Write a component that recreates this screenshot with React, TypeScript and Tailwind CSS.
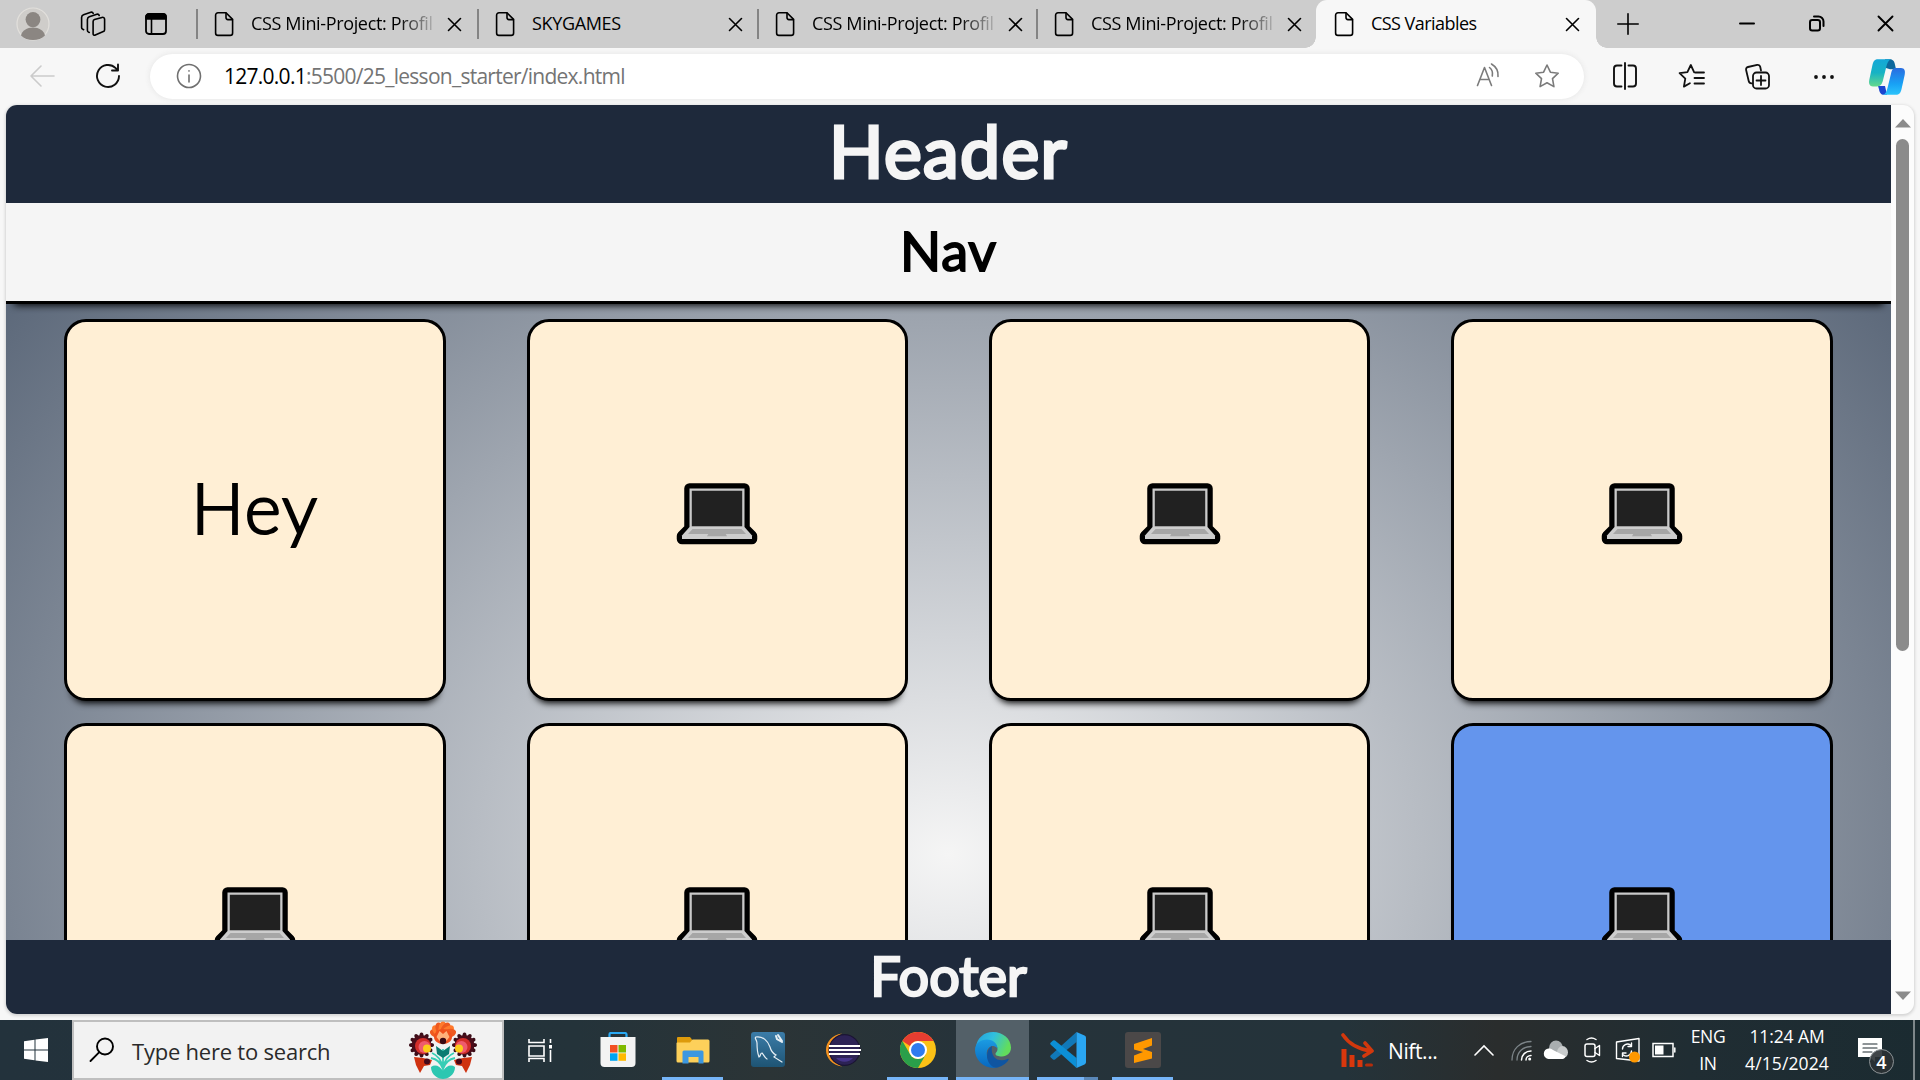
import React from "react";

type BoxProps = { w: number; h: number; vb?: string; className?: string; children: React.ReactNode };

function Svg({ w, h, vb, className = "", children }: BoxProps) {
  return (
    <svg
      width={w}
      height={h}
      viewBox={vb ?? `0 0 ${w} ${h}`}
      className={`block shrink-0 ${className}`}
      fill="none"
      stroke="currentColor"
      strokeWidth={1.6}
      strokeLinecap="round"
      strokeLinejoin="round"
    >
      {children}
    </svg>
  );
}

/* ---------- browser chrome ---------- */

function DocIcon() {
  return (
    <Svg w={20} h={26}>
      <path d="M4 1.8h8l6.6 6.6V22a2.4 2.4 0 0 1-2.4 2.4H4A2.4 2.4 0 0 1 1.6 22V4.2A2.4 2.4 0 0 1 4 1.8z" />
      <path d="M12 2v4.6a2 2 0 0 0 2 2h4.4" />
    </Svg>
  );
}

function CloseIcon() {
  return (
    <Svg w={15} h={15}>
      <path d="M1.5 1.5l12 12M13.5 1.5l-12 12" />
    </Svg>
  );
}

function Tab({ title, width, faded = false }: { title: string; width: string; faded?: boolean }) {
  return (
    <div className={`flex h-12 shrink-0 items-center ${width}`}>
      <div className="h-[30px] w-[2px] bg-[#848484]" />
      <div className="ml-[16px]">
        <DocIcon />
      </div>
      <div
        className={
          "-mt-[2px] ml-[17px] w-[184px] text-[18px] leading-6 tracking-[-0.35px] whitespace-nowrap " +
          (faded ? "[mask-image:linear-gradient(to_right,black_80%,transparent_102%)]" : "")
        }
      >
        {title}
      </div>
      <div className="mt-px ml-[12px]">
        <CloseIcon />
      </div>
    </div>
  );
}

function TabStrip() {
  return (
    <div className="flex h-12 items-center bg-[#cdcdcd] text-black">
      <div className="flex w-[196px] shrink-0 items-center">
        <Svg w={34} h={34} className="ml-[16px]">
          <circle cx="17" cy="17" r="16" fill="#cfcdca" stroke="#e2e0dc" strokeWidth="1.2" />
          <ellipse cx="17" cy="12.6" rx="7.4" ry="7.6" fill="#8b8682" stroke="none" />
          <path d="M5 28.5c1-5 6-8 12-8s11 3 12 8c-3 3-7 4.5-12 4.5s-9-1.500-12-4.500z" fill="#8b8682" stroke="none" />
        </Svg>
        <Svg w={26} h={26} className="ml-[30px]">
          <path d="M14.500 8.600l7.500-2.200a2 2 0 0 1 2.600 1.900v10.400a2 2 0 0 1-1.300 1.900l-8 3.500a1.500 1.500 0 0 1-2.200-1.400V10.500a2 2 0 0 1 1.400-1.900z" />
          <path d="M9.300 21.500l-.8-.4a2 2 0 0 1-1.100-1.800V8.500a3 3 0 0 1 1.900-2.700l7.500-2.600a2 2 0 0 1 2.400 1.200" />
          <path d="M3.600 18.700l-1-.6a2 2 0 0 1-1-1.700V6.500a3 3 0 0 1 1.900-2.700l7.300-2.500a2 2 0 0 1 2.400 1" />
        </Svg>
        <Svg w={24} h={24} className="ml-[38px]">
          <rect x="2" y="2" width="20" height="20" rx="3" strokeWidth="1.800" />
          <path d="M2 7V5a3 3 0 0 1 3-3h14a3 3 0 0 1 3 3v2z" fill="currentColor" />
          <path d="M7.500 7v15" />
        </Svg>
      </div>
      <Tab title="CSS Mini-Project: Profil" width="w-[281px]" faded />
      <Tab title="SKYGAMES" width="w-[280px]" />
      <Tab title="CSS Mini-Project: Profil" width="w-[279px]" faded />
      <Tab title="CSS Mini-Project: Profil" width="w-[280px]" faded />
      <div className="relative flex h-12 w-[280px] shrink-0 items-center rounded-t-[11px] bg-[#f7f7f7]">
        <div className="absolute bottom-0 -left-[11px] h-[11px] w-[11px] bg-[radial-gradient(circle_at_0_0,transparent_10.500px,#f7f7f7_11px)]" />
        <div className="absolute -right-[11px] bottom-0 h-[11px] w-[11px] bg-[radial-gradient(circle_at_100%_0,transparent_10.500px,#f7f7f7_11px)]" />
        <div className="ml-[18px]">
          <DocIcon />
        </div>
        <div className="-mt-[2px] ml-[17px] w-[184px] text-[18px] leading-6 tracking-[-0.55px] whitespace-nowrap">CSS Variables</div>
        <div className="mt-px ml-[10px]">
          <CloseIcon />
        </div>
      </div>
      <Svg w={22} h={22} className="-mt-[1px] ml-[21px]">
        <path d="M11 .8v20.400M.8 11h20.400" />
      </Svg>
      <div className="-mt-px mr-[26px] ml-auto flex items-center">
        <Svg w={16} h={16}>
          <path d="M1 7.500h14" strokeWidth="2" />
        </Svg>
        <Svg w={17} h={17} className="ml-[53px]">
          <rect x="2" y="5" width="10" height="10.500" rx="2.200" strokeWidth="2" />
          <path d="M6 1.500h4.500a5 5 0 0 1 5 5V11" strokeWidth="2" />
        </Svg>
        <Svg w={17} h={17} className="ml-[52px]">
          <path d="M1.500 1.500l14 14M15.500 1.500l-14 14" strokeWidth="1.900" />
        </Svg>
      </div>
    </div>
  );
}

const STAR = "M13 2l3.400 7.200 7.800 1-5.700 5.500 1.400 7.900L13 19.800l-6.900 3.800 1.400-7.900L1.800 10.200l7.800-1z";

function CopilotIcon() {
  return (
    <svg width={38} height={40} viewBox="0 0 38 36" preserveAspectRatio="none" className="block shrink-0">
      <defs>
        <linearGradient id="cpA" x1="0" y1="0" x2="0" y2="1">
          <stop offset="0" stopColor="#14a7d8" />
          <stop offset=".5" stopColor="#17b3c4" />
          <stop offset="1" stopColor="#65d98c" />
        </linearGradient>
        <linearGradient id="cpB" x1="0" y1="0" x2="0" y2="1">
          <stop offset="0" stopColor="#2a6de0" />
          <stop offset=".6" stopColor="#18a2f5" />
          <stop offset="1" stopColor="#2cc4fb" />
        </linearGradient>
      </defs>
      <path d="M10 26h7l2 8h-3c-3 0-4.500-2-5-5z" fill="#1b45cf" />
      <path d="M17 2h5c3 0 4.500 2 5 5l1 4h-6l-4-1z" fill="#0d679c" />
      <path d="M10 2h13c-3 1-4 4-5 8l-3 11c-1 3.500-2.500 5.500-6 5.500H5c-3.500 0-4.500-2.500-3.700-6L4.500 7c.9-3.500 2.500-5 5.500-5z" fill="url(#cpA)" />
      <path d="M28 10h5c3.500 0 4.500 2.500 3.700 6l-3.200 13c-.9 3.500-2.500 5-5.500 5H15c3-1 4-4 5-8l3-11c1-3.500 2-5 5-5z" fill="url(#cpB)" />
    </svg>
  );
}

function Toolbar() {
  return (
    <div className="flex h-[57px] items-center bg-[#f7f7f7] text-[#111]">
      <Svg w={26} h={24} className="-mt-px ml-[29px] text-[#cbcbcb]">
        <path d="M12 2L2 12l10 10M2 12h23" />
      </Svg>
      <Svg w={26} h={26} className="-mt-px ml-[40px]">
        <path d="M24 13a11 11 0 1 1-3.300-7.900L23 7.500M23 1.500v6h-6" strokeWidth="1.900" />
      </Svg>
      <div className="ml-[29px] flex h-[45px] w-[1434px] items-center rounded-full bg-white shadow-[0_0_5px_1px_#e9e9e9]">
        <Svg w={26} h={26} className="-mt-px ml-[26px] text-[#707070]">
          <circle cx="13" cy="13" r="11.500" />
          <path d="M13 12v7M13 7.800v.3" />
        </Svg>
        <div className="-mt-px ml-[22px] text-[21px] leading-[30px] tracking-[-0.74px] whitespace-nowrap text-[#747474]">
          <span className="text-black">127.0.0.1</span>:5500/25_lesson_starter/index.html
        </div>
        <Svg w={25} h={26} className="-mt-[3px] ml-auto text-[#7b7b7b]">
          <path d="M1.500 23.500L8.500 5.500l7 18M4 17.500h9M13.500 5.500c2.500 2 3.500 5 2.800 8.500M15.500 2c5 3 7 7.500 6.500 12.500" />
        </Svg>
        <Svg w={26} h={26} className="-mt-px mr-[24px] ml-[33px] text-[#7b7b7b]">
          <path d={STAR} />
        </Svg>
      </div>
      <Svg w={26} h={28} className="-mt-px ml-[28px]">
        <path d="M9.500 3.500H5A3 3 0 0 0 2 6.500v15a3 3 0 0 0 3 3h4.500M16.500 3.500H21a3 3 0 0 1 3 3v15a3 3 0 0 1-3 3h-4.500M13 1v26" strokeWidth="1.900" />
      </Svg>
      <Svg w={27} h={26} className="-mt-px ml-[40px]">
        <path d="M17 9.500l-.8-.2L12.800 2 9.400 9.200l-7.800 1 5.700 5.500-1.400 7.900 6-3.300M17.500 9.500h8.500M16.500 15h9.500M16.500 20.500h9.500" strokeWidth="1.800" />
      </Svg>
      <Svg w={27} h={28} className="ml-[39px]">
        <path d="M17 7.500l-.8-3.700a2.500 2.500 0 0 0-3-1.900L4 4a2.500 2.500 0 0 0-1.900 3l2.600 11a3 3 0 0 0 3.300 2.300" strokeWidth="1.800" />
        <rect x="9" y="9.500" width="16" height="16" rx="3.500" strokeWidth="1.800" />
        <path d="M17 13v9M12.500 17.500h9" strokeWidth="1.800" />
      </Svg>
      <Svg w={22} h={6} className="ml-[42px]">
        <circle cx="3" cy="3" r="1.900" fill="currentColor" stroke="none" />
        <circle cx="11" cy="3" r="1.900" fill="currentColor" stroke="none" />
        <circle cx="19" cy="3" r="1.900" fill="currentColor" stroke="none" />
      </Svg>
      <div className="ml-[33px]">
        <CopilotIcon />
      </div>
    </div>
  );
}

/* ---------- page ---------- */

function Laptop() {
  return (
    <svg width={82} height={62} viewBox="0 0 82 62" className="mt-[8px] block">
      <path d="M13.500 5.500h55v40l7.500 7.500v3H6v-3l7.500-7.500z" fill="#000" stroke="#000" strokeWidth="10.500" strokeLinejoin="round" />
      <path d="M13.500 5.500h55V44h-55z" fill="#c9c9c9" />
      <path d="M15.800 7.800h50.400v35.400H15.800z" fill="#212121" />
      <path d="M13.500 44h55l7.500 8.500V56H6v-3.500z" fill="#cdcdcd" />
      <path d="M16.500 46h49l4.500 5H12z" fill="#a6a6a6" />
      <path d="M32.500 50.500h17l1.500 2.800H31z" fill="#a6a6a6" />
    </svg>
  );
}

function Card({ label, active = false }: { label?: string; active?: boolean }) {
  return (
    <div
      className={
        "flex h-[382px] items-center justify-center rounded-[22px] border-[3px] border-black shadow-[0_9px_7.5px_-7.5px_#000] " +
        (active ? "bg-[#6495ed]" : "bg-[#ffefd5]")
      }
    >
      {label ? (
        <span className="-mt-[7px] text-[70px] leading-none font-light tracking-[1.6px] [-webkit-text-stroke:2.2px_black] [stroke-linejoin:round]">
          {label}
        </span>
      ) : (
        <Laptop />
      )}
    </div>
  );
}

function Page() {
  return (
    <div className="flex h-[909px] w-[1908px] overflow-hidden rounded-[11px] bg-[#fcfcfc] shadow-[0_1px_3px_1px_#d4d4d4]">
      <div className="flex w-[1885px] flex-col font-['Lato',sans-serif]">
        <header className="flex h-[98px] shrink-0 items-center justify-center bg-[#1e293b] text-[71.5px] leading-none text-[#f5f5f5]">
          <span className="-mt-[6px] tracking-[1.4px] [-webkit-text-stroke:3.2px_#f5f5f5] [stroke-linejoin:round]">Header</span>
        </header>
        <nav className="z-10 flex h-[101px] shrink-0 items-center justify-center border-b-[3px] border-black bg-[#f5f5f5] text-[54px] leading-none text-black shadow-[0_9px_7.5px_-7.5px_#000]">
          <span className="-mt-[3px] tracking-[0.8px] [-webkit-text-stroke:1.800px_black] [stroke-linejoin:round]">Nav</span>
        </nav>
        <main className="h-[636px] shrink-0 overflow-hidden bg-[radial-gradient(ellipse_1333px_1062px_at_942px_550px,#f5f5f5,#475569)] px-[58.2px] pt-[15px]">
          <div className="grid grid-cols-[repeat(4,381.6px)] justify-between gap-y-[22px]">
            <Card label="Hey" />
            <Card />
            <Card />
            <Card />
            <Card />
            <Card />
            <Card />
            <Card active />
          </div>
        </main>
        <footer className="flex h-[74px] shrink-0 items-center justify-center bg-[#1e293b] text-[54px] leading-none text-[#f5f5f5]">
          <span className="-mt-[3px] [-webkit-text-stroke:2.4px_#f5f5f5] [stroke-linejoin:round]">Footer</span>
        </footer>
      </div>
      <div className="flex w-[23px] flex-col items-center pt-[14px]">
        <Svg w={16} h={9}>
          <path d="M8 0l8 8.500H0z" fill="#8b8b8b" stroke="none" />
        </Svg>
        <div className="mt-[11px] h-[512px] w-[13px] rounded-full bg-[#8b8b8b]" />
        <Svg w={16} h={9} className="mt-auto mb-[14px]">
          <path d="M0 .5h16L8 9z" fill="#8b8b8b" stroke="none" />
        </Svg>
      </div>
    </div>
  );
}

/* ---------- taskbar ---------- */

function Flower() {
  const petals = [-75, -50, -25, 0, 25, 50, 75];
  const ring = Array.from({ length: 12 }, (_, i) => i * 30);
  return (
    <svg width={68} height={58} viewBox="-1 0 68 58" className="block shrink-0">
      {petals.map((a) => (
        <ellipse key={a} cx="33" cy="8.500" rx="4.500" ry="8" fill={a % 50 === 0 ? "#ff7a2d" : "#ee5a20"} transform={`rotate(${a} 33 14)`} />
      ))}
      <path d="M24 16a9 8 0 0 1 18 0c0 4-4 7-9 7s-9-3-9-7z" fill="#f0501c" />
      <path d="M26.500 16l3-6 3.500 3 3.500-3 3 6-4 5h-5z" fill="#ffb07a" />
      <circle cx="33" cy="20" r="3.200" fill="#3b0a14" />
      {[11.5, 54.5].map((cx) => (
        <g key={cx}>
          {ring.map((a) => (
            <ellipse key={a} cx={cx} cy="14.500" rx="2" ry="3" fill="#3b0d18" transform={`rotate(${a} ${cx} 24)`} />
          ))}
          <circle cx={cx} cy="24" r="10" fill="#4a0d1a" />
          <circle cx={cx + (cx < 33 ? 1.5 : -1.5)} cy="25" r="8" fill="#d22d2a" />
          <circle cx={cx + (cx < 33 ? 3 : -3)} cy="26" r="6" fill="#ee5b6d" />
          <circle cx={cx + (cx < 33 ? 5.5 : -5.5)} cy="27.500" r="4" fill="#fccb18" />
        </g>
      ))}
      <path d="M4 36l9 1 9 2-2 5-6 1-4 7-4-8z" fill="#cf3210" />
      <path d="M62 36l-9 1-9 2 2 5 6 1 4 7 4-8z" fill="#cf3210" />
      <circle cx="17" cy="40.500" r="3" fill="#45091a" />
      <circle cx="49" cy="40.500" r="3" fill="#45091a" />
      <path d="M33 28v22M33 48c-2-6-6-10-12-11M33 48c2-6 6-10 12-11M33 46c-2-7-6-12-11-14M33 46c2-7 6-12 11-14" stroke="#37cdb5" strokeWidth="1.800" fill="none" />
      <path d="M26 25l7 5 7-5-1 8-6 4-6-4z" fill="#0b7c71" />
      <path d="M33 50c-3-5-8-7-12-4 0 5 3 11 12 12 9-1 12-7 12-12-4-3-9-1-12 4z" fill="#2cc7b1" />
    </svg>
  );
}

function Store() {
  return (
    <svg width={36} height={36} viewBox="0 0 36 36">
      <path d="M9.500 6V2.500A1.500 1.500 0 0 1 11 1h14a1.500 1.500 0 0 1 1.500 1.500V6" fill="none" stroke="#2aa9f3" strokeWidth="2.200" />
      <path d="M.5 5h35v26a4 4 0 0 1-4 4h-27a4 4 0 0 1-4-4z" fill="#f3f3f3" />
      <path d="M10 13h7.500v7.500H10z" fill="#f25022" />
      <path d="M18.500 13H26v7.500h-7.500z" fill="#7fba00" />
      <path d="M10 21.300h7.500v7.500H10z" fill="#00a4ef" />
      <path d="M18.500 21.300H26v7.500h-7.500z" fill="#ffb900" />
    </svg>
  );
}

function Explorer() {
  return (
    <svg width={34} height={28} viewBox="0 0 34 28">
      <path d="M1 2a1 1 0 0 1 1-1h12l2 2.500V8H1z" fill="#dd9a0b" />
      <path d="M1 6.500h13l2.500-3H32a1.500 1.500 0 0 1 1.500 1.500v20a1.500 1.500 0 0 1-1.500 1.500H2A1.500 1.500 0 0 1 .5 25V7z" fill="#fdd05a" />
      <path d="M6.500 27.500V16A1.500 1.500 0 0 1 8 14.500h18a1.500 1.500 0 0 1 1.500 1.500v11.500h-5V21h-10v6.500z" fill="#3c97e0" />
    </svg>
  );
}

function MySql() {
  return (
    <svg width={34} height={35} viewBox="0 0 34 35">
      <defs>
        <linearGradient id="my" x1="0" y1="0" x2="0" y2="1">
          <stop offset="0" stopColor="#3b7ca8" />
          <stop offset="1" stopColor="#1e5474" />
        </linearGradient>
      </defs>
      <rect width="34" height="35" rx="3" fill="url(#my)" />
      <path
        d="M5 5c7-1 12 4 14 10 1 4 2 6 6 8l-2 2 8 5M5 5c-2 1 1 3 1 6 0 5 0 9 2 14 2-1 1-4 3-4 2 2 3 5 5 6"
        fill="none"
        stroke="#e6eff5"
        strokeWidth="1.200"
        strokeLinecap="round"
      />
      <path d="M25 4l1 3 5 3M27 3l4 6" stroke="#e6eff5" strokeWidth="2" fill="none" strokeLinecap="round" />
    </svg>
  );
}

function Eclipse() {
  return (
    <svg width={36} height={34} viewBox="0 0 36 34">
      <path d="M17 .5C7 2 1 9 1 17s6 15 16 16.500C10 30 5 24 5 17S10 4 17 .5z" fill="#f7941e" />
      <circle cx="19.500" cy="17" r="16" fill="#1b1533" />
      <circle cx="19.500" cy="17" r="14.800" fill="#2c2255" />
      <path d="M11 25a10 8 0 0 0 17 0z" fill="#45348a" />
      <path d="M4 12h31v2H4zM4 16h32v2H4zM4 20h31v2H4z" fill="#fff" />
    </svg>
  );
}

function Chrome() {
  return (
    <svg width={36} height={36} viewBox="0 0 36 36">
      <circle cx="18" cy="18" r="18" fill="#fbc116" />
      <path d="M2.400 9A18 18 0 0 1 33.600 9H18a9 9 0 0 0-8 5z" fill="#e63d31" />
      <path d="M2.400 9A18 18 0 0 0 18 36l7.800-13.500A9 9 0 0 1 10.200 22.500z" fill="#2a9f4a" />
      <circle cx="18" cy="18" r="9" fill="#fff" />
      <circle cx="18" cy="18" r="7" fill="#2f7bee" />
    </svg>
  );
}

function Edge() {
  return (
    <svg width={36} height={36} viewBox="0 0 36 36">
      <defs>
        <linearGradient id="edA" x1="0" y1="0" x2="1" y2=".35">
          <stop offset="0" stopColor="#239fdc" />
          <stop offset=".5" stopColor="#30bfdf" />
          <stop offset="1" stopColor="#62dd5c" />
        </linearGradient>
        <linearGradient id="edB" x1="0" y1="0" x2="0" y2="1">
          <stop offset="0" stopColor="#1b9be2" />
          <stop offset="1" stopColor="#0867bf" />
        </linearGradient>
      </defs>
      <path d="M1 15C2 6 9 0 18 0c10 0 18 7 18 15.500 0 5.500-4 9-9 9-4 0-6.500-1-6.500-2.500s2-2 2-5c0-4-4-7-9-7-6 0-11 2-12.500 5z" fill="url(#edA)" />
      <path d="M0 18c0-7 6-10.500 12-10.500 6 0 10.500 4 10.500 9-1.500-2-3.500-2.500-5.500-2.500-4 1-6 5-5 10 1 6 5 10 9 11.800C9 37 0 28 0 18z" fill="url(#edB)" />
      <path d="M17 14c-3 2-5 5-5 9.500C12 30 16 35 21 35.800 26 35 31 32 33.500 28c.5-1-.3-1.500-1-1C24 31 15 26 17 14z" fill="#0f55a1" />
    </svg>
  );
}

function VsCode() {
  return (
    <svg width={36} height={36} viewBox="0 0 36 36">
      <path d="M26.500 0v10L5 27.500a2 2 0 0 1-2 0L.8 25.500a1.500 1.500 0 0 1 0-2.200z" fill="#1178b8" />
      <path d="M26.500 36V26L5 8.500a2 2 0 0 0-2 0L.8 10.500a1.500 1.500 0 0 0 0 2.200z" fill="#0c8fd6" />
      <path d="M26.500 0L34.500 3.500a2.500 2.500 0 0 1 1.500 2.200v24.600a2.500 2.500 0 0 1-1.500 2.200L26.500 36z" fill="#2aa6f2" />
    </svg>
  );
}

function Sublime() {
  return (
    <svg width={36} height={36} viewBox="0 0 36 36">
      <rect width="36" height="36" rx="3" fill="#4b4848" />
      <path d="M9 12l18-6v7.500L18 17l9 3v6.500L9 31v-7.500l9-3.500-9-2.500z" fill="#ff9800" />
    </svg>
  );
}

function TaskCell({ children, bar, active = false }: { children: React.ReactNode; bar?: "full" | "split"; active?: boolean }) {
  return (
    <div
      className={
        "flex h-[60px] w-[75px] shrink-0 flex-col items-center " +
        (active ? "bg-[linear-gradient(to_right,transparent_1px,#536068_1px,#536068_74px,transparent_74px)]" : "")
      }
    >
      <div className="flex h-[57px] items-center justify-center pt-[2px]">{children}</div>
      {bar === "full" && <div className={"h-[3px] bg-[#76b5f8] " + (active ? "w-[73px]" : "w-[61px]")} />}
      {bar === "split" && (
        <div className="flex h-[3px] w-[61px]">
          <div className="w-[47px] bg-[#76b5f8]" />
          <div className="w-[14px] bg-[#5a88b8]" />
        </div>
      )}
    </div>
  );
}

function Taskbar() {
  return (
    <div className="flex h-[60px] items-center bg-[linear-gradient(to_right,#23323c,#24333a_30%,#2b3436_40%,#26333a_50%,#24333a_70%,#2a2d2d_78%,#202d33_88%,#1b2b31)] text-white">
      <div className="flex w-[72px] shrink-0 justify-center">
        <svg width={24} height={24} viewBox="0 0 24 24" fill="#fff">
          <path d="M0 3.200L10.500 1.800V11.400H0zM11.500 1.600L24 0v11.400H11.500zM0 12.600h10.500v9.600L0 20.800zM11.500 12.600H24V24l-12.500-1.600z" />
        </svg>
      </div>
      <div className="flex h-[60px] w-[432px] shrink-0 items-center border-2 border-[#bfbfbf] bg-[#f2f2f2] text-[#2a2a2a]">
        <Svg w={26} h={26} className="ml-[15px] text-black">
          <circle cx="16" cy="9.500" r="8" strokeWidth="1.900" />
          <path d="M10.300 15.200L1.500 24" strokeWidth="1.900" />
        </Svg>
        <div className="mt-px ml-[17px] w-[277px] text-[22px] leading-8 tracking-[-0.22px] whitespace-nowrap">Type here to search</div>
        <Flower />
      </div>
      <div className="flex w-[76px] shrink-0 justify-center">
        <Svg w={25} h={25} className="-ml-[3px]">
          <g strokeLinecap="butt" strokeLinejoin="miter" strokeWidth="1.600">
            <path d="M1 1v3.500h15V1M1 8h15v10H1zM1 24v-3.500h15V24M22.500 1v4M22.500 12v12" />
            <path d="M22.500 7v3.500" strokeWidth="3" />
          </g>
        </Svg>
      </div>
      <TaskCell><Store /></TaskCell>
      <TaskCell bar="full"><Explorer /></TaskCell>
      <TaskCell><MySql /></TaskCell>
      <TaskCell><Eclipse /></TaskCell>
      <TaskCell bar="full"><Chrome /></TaskCell>
      <TaskCell bar="full" active><Edge /></TaskCell>
      <TaskCell bar="split"><VsCode /></TaskCell>
      <TaskCell bar="full"><Sublime /></TaskCell>

      <svg width={34} height={34} viewBox="0 0 34 34" className="ml-[161px] shrink-0" fill="none">
        <path d="M2 2c6 9 14 14 28 16M24 10l7 8-8 5" stroke="#d2380d" strokeWidth="3.600" strokeLinecap="round" strokeLinejoin="round" />
        <path d="M3 16v18M11 22v12M19 27v7" stroke="#d8370d" strokeWidth="5" />
        <path d="M25.500 32h5" stroke="#b32d0c" strokeWidth="3" strokeLinecap="round" />
      </svg>
      <div className="mt-px ml-[13px] w-[85px] text-[21px] leading-8 tracking-[-0.4px]">Nift...</div>
      <Svg w={22} h={12}>
        <path d="M2 11l9-9 9 9" strokeLinejoin="miter" />
      </Svg>
      <Svg w={21} h={21} className="ml-[16px] text-[#7d8589]">
        <path d="M1 20C1 9 9 1.500 20 1.500M6 20C6 12 12 6.500 20 6.500" strokeWidth="1.300" />
        <path d="M10.500 20c0-5 4-9 9.500-9M15 20c0-2.500 2-4.500 5-4.500" stroke="#fff" strokeWidth="1.500" />
        <circle cx="18.700" cy="19" r="1.500" fill="#fff" stroke="none" />
      </Svg>
      <svg width={26} height={20} viewBox="0 0 26 18" preserveAspectRatio="none" className="ml-[11px] shrink-0">
        <circle cx="13" cy="7.500" r="7" fill="#a9aeb0" />
        <circle cx="19.500" cy="11" r="5.500" fill="#c9cccd" />
        <path d="M5.500 17a4.700 4.700 0 0 1 0-9.400c2 0 3 .3 4.500 1.500l12.500 5.500c-.5 1.500-1.500 2.400-3 2.400z" fill="#fff" />
      </svg>
      <Svg w={19} h={26} className="ml-[14px]">
        <path d="M4 2.500c3-2 6-2 9 0M4 23.500c3 2 6 2 9 0" strokeWidth="1.400" />
        <rect x="2" y="7" width="10" height="12.500" rx="2" strokeWidth="1.500" />
        <path d="M12 11.500l4.500-3v10l-4.500-3" strokeWidth="1.400" />
      </Svg>
      <Svg w={26} h={26} className="ml-[13px]">
        <path d="M1.500 5L24 1.500V24L1.500 21.500z" strokeWidth="1.400" />
        <path d="M7.500 12a5 5 0 0 1 8-4M16.500 6v3.500H13M16.500 14a5 5 0 0 1-8 4M7.500 19.500V16H11" strokeWidth="1.400" />
        <circle cx="19.500" cy="20" r="5.500" fill="#ff9800" stroke="none" />
      </Svg>
      <Svg w={24} h={16} className="ml-[11px]">
        <path d="M1 1.500h20v13H1zM22.800 6v4" strokeLinejoin="miter" strokeWidth="1.500" />
        <path d="M3 3.500h8.500v9H3z" fill="#fff" stroke="none" />
      </Svg>
      <div className="ml-[12px] flex w-[40px] flex-col items-center text-[17.500px] leading-[27px] tracking-[-0.4px]">
        <span>ENG</span>
        <span>IN</span>
      </div>
      <div className="ml-[9px] flex w-[100px] flex-col items-center text-[17.500px] leading-[27px] whitespace-nowrap">
        <span className="tracking-[-0.1px]">11:24 AM</span>
        <span className="tracking-[0.1px]">4/15/2024</span>
      </div>
      <div className="relative ml-[21px] h-[40px] w-[40px] shrink-0">
        <Svg w={25} h={25} className="mt-[8px]">
          <path d="M0 0h24v19h-7v5l-5-5H0z" fill="#fff" stroke="none" />
          <path d="M5 6h14M5 10h14M5 14h9" stroke="#1f2b30" strokeWidth="1.200" />
        </Svg>
        <div className="absolute top-[19px] left-[11px] flex h-[25px] w-[25px] items-center justify-center rounded-full border border-[#8d9396] bg-[#2b3134]/90 text-[18px] leading-none font-semibold">
          4
        </div>
      </div>
      <div className="ml-auto h-[60px] w-[2px] bg-[#7d868a]" />
      <div className="w-[5px]" />
    </div>
  );
}

export default function App() {
  return (
    <div className="flex h-[1080px] w-[1920px] flex-col overflow-hidden bg-[#f7f7f7] font-['Open_Sans',sans-serif]">
      <TabStrip />
      <Toolbar />
      <div className="h-[915px] px-[6px]">
        <Page />
      </div>
      <Taskbar />
    </div>
  );
}
